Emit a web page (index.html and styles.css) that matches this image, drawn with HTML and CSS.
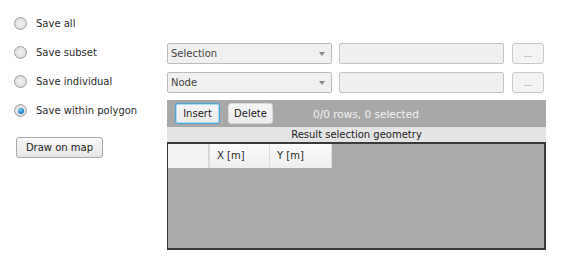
FILE: index.html
```html
<!DOCTYPE html>
<html>
<head>
<meta charset="utf-8">
<link rel="stylesheet" href="styles.css">
</head>
<body>
<div class="page">
  <div class="left">
    <label class="radio-row"><span class="radio"></span><span>Save all</span></label>
    <label class="radio-row"><span class="radio"></span><span>Save subset</span></label>
    <label class="radio-row"><span class="radio"></span><span>Save individual</span></label>
    <label class="radio-row"><span class="radio checked"></span><span>Save within polygon</span></label>
    <button class="btn draw">Draw on map</button>
  </div>
  <div class="right">
    <div class="ctl-row first">
      <div class="combo"><span>Selection</span><span class="arrow"></span></div>
      <div class="field"></div>
      <div class="dots">...</div>
    </div>
    <div class="ctl-row">
      <div class="combo"><span>Node</span><span class="arrow"></span></div>
      <div class="field"></div>
      <div class="dots">...</div>
    </div>
    <div class="toolbar">
      <button class="btn tb insert">Insert</button>
      <button class="btn tb">Delete</button>
      <span class="status">0/0 rows, 0 selected</span>
    </div>
    <div class="caption">Result selection geometry</div>
    <div class="table">
      <div class="thead">
        <div class="th corner"></div>
        <div class="th col">X [m]</div>
        <div class="th col">Y [m]</div>
      </div>
    </div>
  </div>
</div>
</body>
</html>
```

FILE: styles.css
```css
html, body {
  margin: 0;
  padding: 0;
  background: #ffffff;
}
body {
  font-family: "DejaVu Sans", Tahoma, sans-serif;
  font-size: 10px;
  color: #2b2b2b;
}
.page {
  display: flex;
  padding-top: 8px;
}
.left {
  width: 167px;
  display: flex;
  flex-direction: column;
  padding-left: 14px;
  padding-top: 1px;
  box-sizing: border-box;
}
.radio-row {
  height: 29px;
  display: flex;
  align-items: center;
  gap: 9px;
}
.radio {
  width: 11px;
  height: 11px;
  border-radius: 50%;
  border: 1px solid #a0a0a0;
  background: radial-gradient(circle at 50% 50%, #f4f4f4 0, #e2e2e2 55%, #cccccc 100%);
  box-sizing: content-box;
  position: relative;
}
.radio.checked::after {
  content: "";
  position: absolute;
  left: 2.5px;
  top: 2.5px;
  width: 6px;
  height: 6px;
  border-radius: 50%;
  background: radial-gradient(circle at 40% 35%, #7fd0f5 0, #1f86c8 60%, #125c96 100%);
}
.btn {
  font-family: inherit;
  font-size: 10px;
  color: #222;
  background: linear-gradient(#fafafa, #e6e6e6);
  border: 1px solid #a9a9a9;
  border-radius: 3px;
  height: 21px;
  padding: 0;
  box-sizing: border-box;
}
.draw {
  margin-top: 12px;
  width: 87px;
  margin-left: 2px;
}
.right {
  width: 379px;
  display: flex;
  flex-direction: column;
}
.ctl-row {
  display: flex;
  height: 21px;
  margin-top: 8px;
}
.ctl-row.first {
  margin-top: 35px;
}
.combo {
  width: 165px;
  box-sizing: border-box;
  border: 1px solid #bcbcbc;
  border-radius: 2px;
  background: #f0f0f0;
  display: flex;
  align-items: center;
  justify-content: space-between;
  padding: 0 6px 0 3px;
  color: #444;
}
.arrow {
  width: 0;
  height: 0;
  border-left: 3.5px solid transparent;
  border-right: 3.5px solid transparent;
  border-top: 4px solid #8a8a8a;
}
.field {
  width: 165px;
  margin-left: 7px;
  box-sizing: border-box;
  border: 1px solid #c4c4c4;
  border-radius: 2px;
  background: #efefef;
}
.dots {
  width: 32px;
  margin-left: 8px;
  box-sizing: border-box;
  border: 1px solid #c8c8c8;
  border-radius: 3px;
  background: #f4f4f4;
  color: #777;
  font-size: 9px;
  display: flex;
  align-items: center;
  justify-content: center;
}
.toolbar {
  margin-top: 7px;
  height: 27px;
  background: #a8a8a8;
  display: flex;
  align-items: center;
  padding-left: 8px;
}
.tb {
  width: 45px;
  margin-right: 8px;
  background: linear-gradient(#f6f6f6, #ececec);
  border-color: #d8d8d8;
}
.tb.insert {
  border: 1px solid #4aa6d6;
  box-shadow: inset 0 0 0 1px #a8dcf4;
}
.status {
  margin-left: 32px;
  color: #f2f2f2;
  font-size: 10.5px;
}
.caption {
  height: 15px;
  background: #e4e4e4;
  text-align: center;
  line-height: 15px;
  color: #222;
}
.table {
  height: 108px;
  background: #aaaaaa;
  border: 2px solid #3a3a3a;
  border-left-width: 1px;
  box-sizing: border-box;
}
.thead {
  display: flex;
  height: 24px;
}
.th {
  height: 24px;
  box-sizing: border-box;
  background: #f3f3f5;
  line-height: 24px;
}
.corner {
  width: 42px;
  border-right: 2px solid #d8d8d8;
}
.col {
  width: 60px;
  padding-left: 7px;
  background: linear-gradient(#fbfbfb, #eeeeee);
  border-right: 1px solid #dcdcdc;
}
.col:last-child {
  width: 62px;
}
```
